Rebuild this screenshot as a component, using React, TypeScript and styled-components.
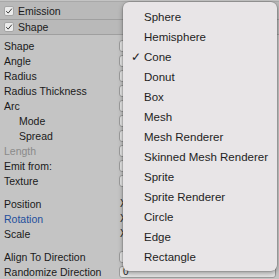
import { createGlobalStyle } from 'styled-components';
import styled from 'styled-components';

const GlobalStyle = createGlobalStyle`
  html, body {
    margin: 0;
    padding: 0;
    width: 279px;
    height: 279px;
    overflow: hidden;
    background: #c4c4c4;
  }
  body {
    font-family: "Liberation Sans", Arial, sans-serif;
  }
`;

const Inspector = styled.div`
  position: relative;
  width: 279px;
  height: 279px;
  overflow: hidden;
  background: #c4c4c4;
  display: flex;
  flex-direction: column;
  padding-top: 1px;
  box-sizing: border-box;
`;

const ModuleHeader = styled.div<{ $h: number }>`
  display: flex;
  align-items: center;
  gap: 4px;
  height: ${(p) => p.$h}px;
  padding-left: 4px;
  background: #b9b9b9;
  border-top: 1px solid #a9a9a9;
  border-bottom: 1px solid #9f9f9f;
  font-size: 10.5px;
  color: #1a1a1a;
  & + & {
    border-top: none;
  }
`;

const CheckBox = styled.div`
  width: 10px;
  height: 10px;
  border-radius: 2px;
  background: #ececec;
  border: 1px solid #a5a5a5;
  box-sizing: border-box;
  display: flex;
  align-items: center;
  justify-content: center;
  svg {
    width: 8px;
    height: 8px;
  }
`;

const Body = styled.div`
  display: flex;
  flex-direction: column;
  padding-top: 3px;
`;

const Row = styled.div<{ $gapBefore?: number }>`
  display: flex;
  align-items: center;
  height: 15px;
  margin-top: ${(p) => p.$gapBefore ?? 0}px;
`;

const Label = styled.div<{ $indent?: boolean; $tone?: 'normal' | 'dim' | 'blue' }>`
  width: 119px;
  padding-left: ${(p) => (p.$indent ? 19 : 4)}px;
  box-sizing: border-box;
  font-size: 10.5px;
  white-space: nowrap;
  color: ${(p) => (p.$tone === 'dim' ? '#8a8a8a' : p.$tone === 'blue' ? '#1f4f9c' : '#1a1a1a')};
`;

const Field = styled.div`
  flex: 1;
  height: 12px;
  margin-right: 3px;
  border: 1px solid #9c9c9c;
  border-radius: 3px;
  background: #e3e3e3;
  box-sizing: border-box;
  font-size: 10px;
  line-height: 10px;
  padding-left: 3px;
  color: #222;
`;

const AxisLabel = styled.div`
  font-size: 10px;
  color: #222;
  padding-left: 1px;
`;

const Popup = styled.div`
  position: absolute;
  left: 123px;
  top: 2px;
  width: 154px;
  height: 269px;
  background: #e8e5e7;
  border-radius: 6px;
  box-shadow: 0 2px 5px rgba(0, 0, 0, 0.35), 0 0 0 0.5px rgba(0, 0, 0, 0.2);
  padding-top: 5px;
  box-sizing: border-box;
  display: flex;
  flex-direction: column;
`;

const MenuItem = styled.div`
  display: flex;
  align-items: center;
  height: 20px;
  font-size: 11.5px;
  color: #1e1e1e;
  white-space: nowrap;
`;

const Tick = styled.div`
  width: 21px;
  display: flex;
  justify-content: flex-end;
  padding-right: 3px;
  box-sizing: border-box;
  font-size: 12px;
`;

const checkSvg = (
  <svg viewBox="0 0 10 10">
    <path d="M1.5 5.2 L4 7.6 L8.6 2" fill="none" stroke="#333" strokeWidth="1.2" />
  </svg>
);

type RowDef = { label: string; indent?: boolean; tone?: 'normal' | 'dim' | 'blue'; gap?: number; axis?: boolean; value?: string };

const rows: RowDef[] = [
  { label: 'Shape' },
  { label: 'Angle' },
  { label: 'Radius' },
  { label: 'Radius Thickness' },
  { label: 'Arc' },
  { label: 'Mode', indent: true },
  { label: 'Spread', indent: true },
  { label: 'Length', tone: 'dim' },
  { label: 'Emit from:' },
  { label: 'Texture' },
  { label: 'Position', gap: 8, axis: true },
  { label: 'Rotation', tone: 'blue', axis: true },
  { label: 'Scale', axis: true },
  { label: 'Align To Direction', gap: 8 },
  { label: 'Randomize Direction', value: '0' },
];

const items = [
  'Sphere',
  'Hemisphere',
  'Cone',
  'Donut',
  'Box',
  'Mesh',
  'Mesh Renderer',
  'Skinned Mesh Renderer',
  'Sprite',
  'Sprite Renderer',
  'Circle',
  'Edge',
  'Rectangle',
];

export default function App() {
  return (
    <>
      <GlobalStyle />
      <Inspector>
        <ModuleHeader $h={17}>
          <CheckBox>{checkSvg}</CheckBox>
          Emission
        </ModuleHeader>
        <ModuleHeader $h={14}>
          <CheckBox>{checkSvg}</CheckBox>
          Shape
        </ModuleHeader>
        <Body>
          {rows.map((r) => (
            <Row key={r.label} $gapBefore={r.gap}>
              <Label $indent={r.indent} $tone={r.tone}>
                {r.label}
              </Label>
              {r.axis ? <AxisLabel>X</AxisLabel> : <Field>{r.value}</Field>}
            </Row>
          ))}
        </Body>
        <Popup>
          {items.map((it) => (
            <MenuItem key={it}>
              <Tick>{it === 'Cone' ? '✓' : ''}</Tick>
              {it}
            </MenuItem>
          ))}
        </Popup>
      </Inspector>
    </>
  );
}
